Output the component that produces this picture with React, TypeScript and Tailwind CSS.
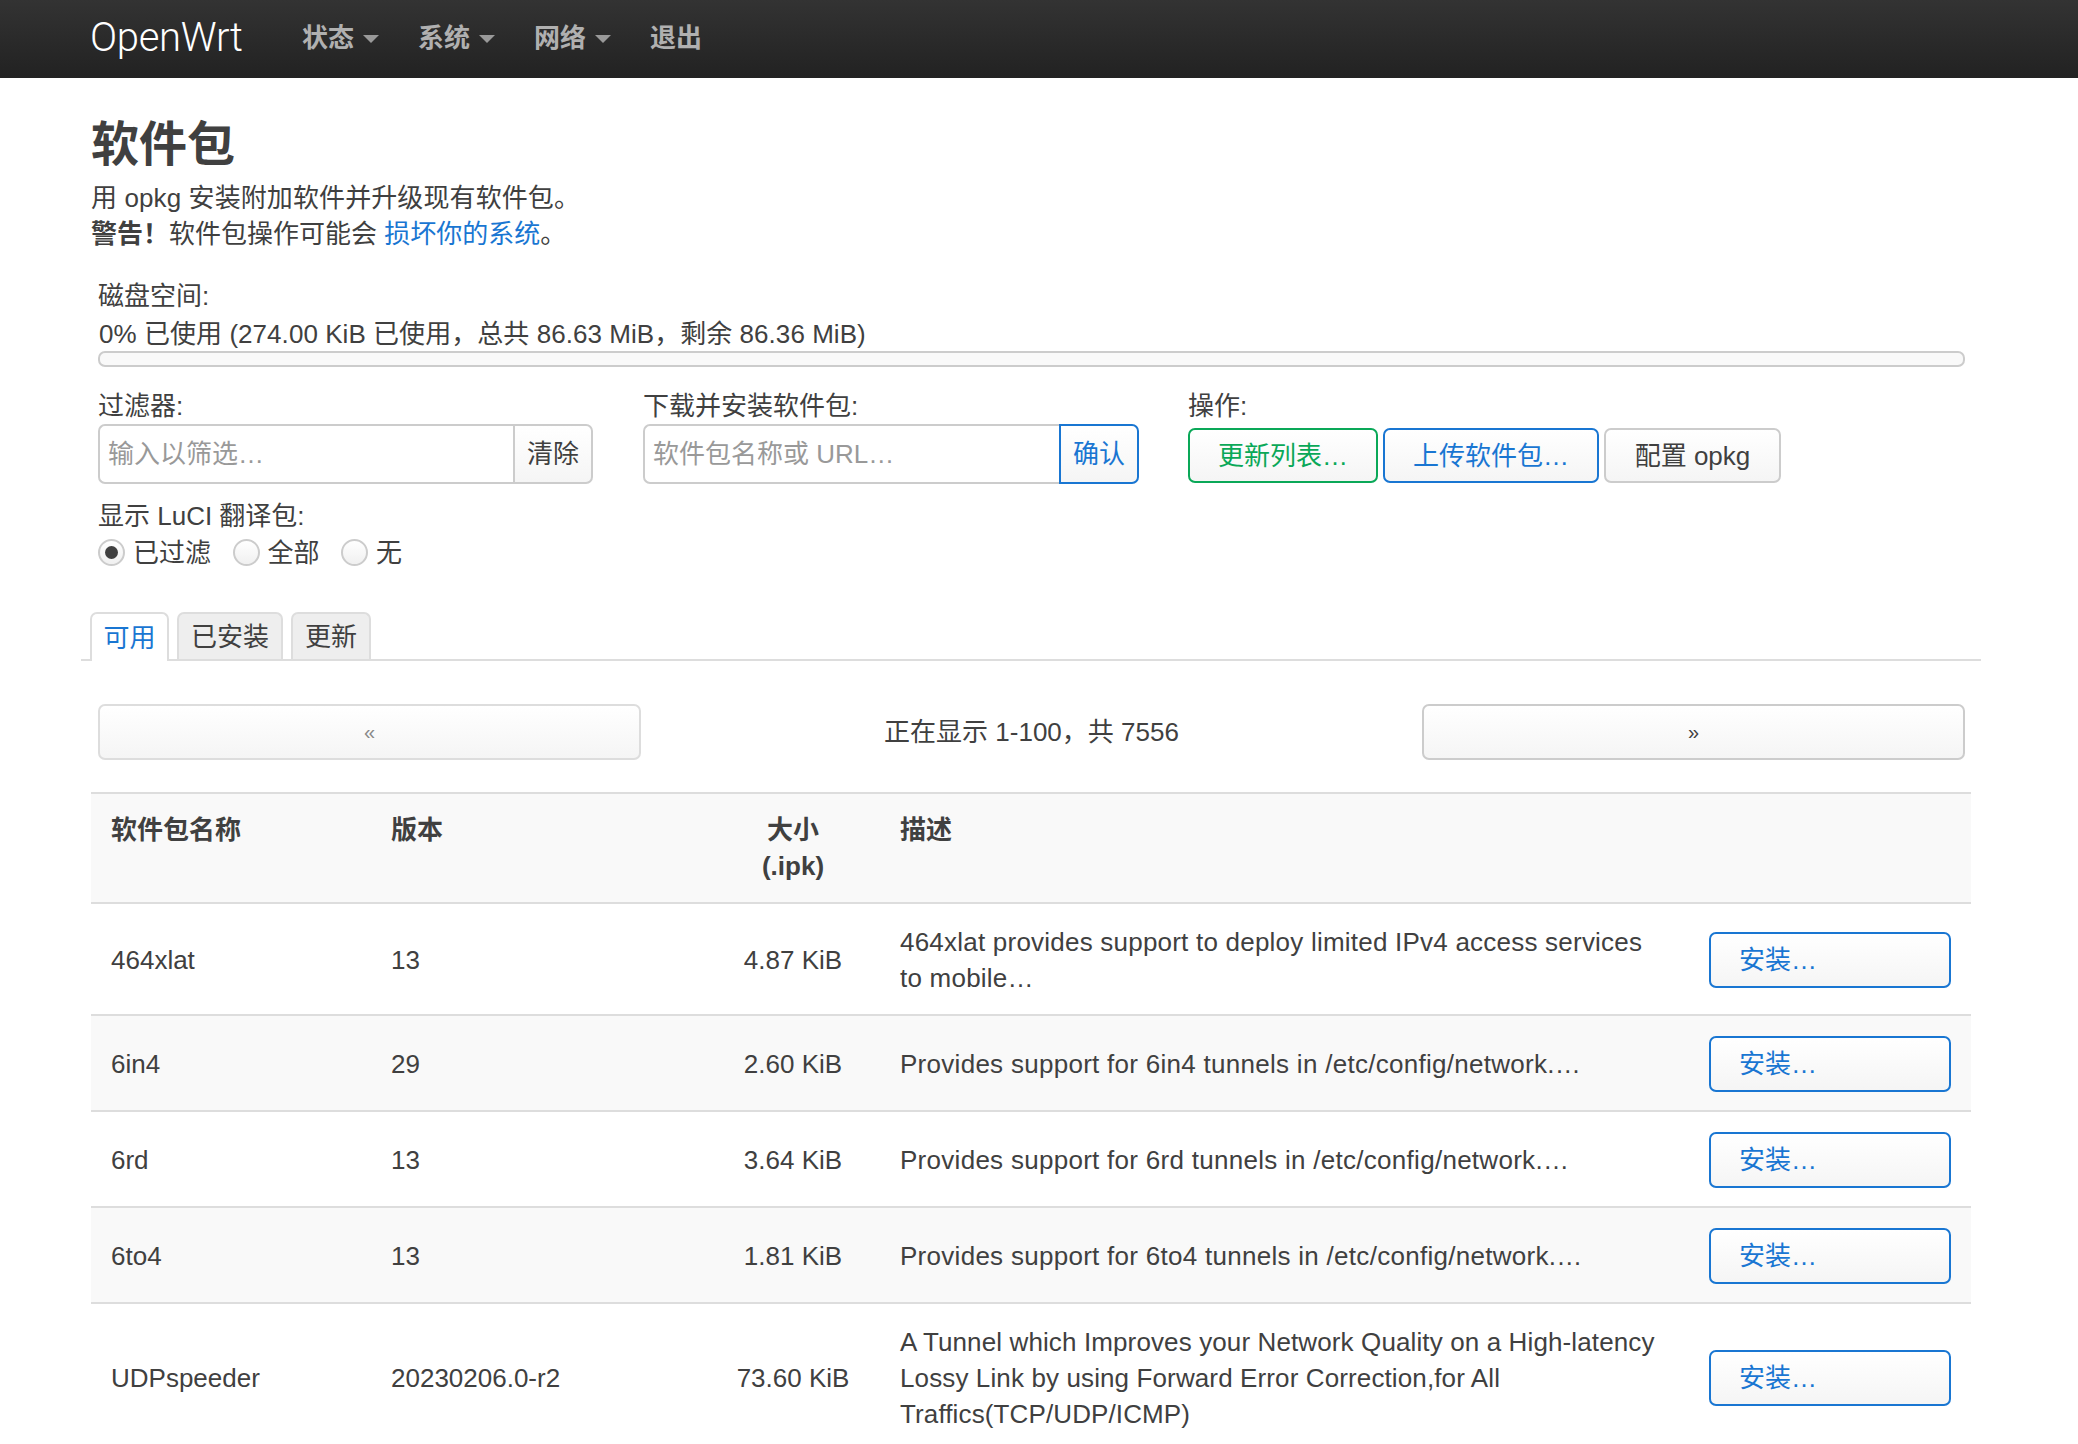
const font = "font-['Liberation_Sans','Noto_Sans_CJK_SC',sans-serif]";

const btn = 'rounded-[7px] border-2 bg-gradient-to-b from-white to-[#f5f5f5] text-[26px] leading-[36px]';

const rows = [
  { name: '464xlat', version: '13', size: '4.87 KiB', tracking: 'tracking-[0.22px]', desc: '464xlat provides support to deploy limited IPv4 access services to mobile…' },
  { name: '6in4', version: '29', size: '2.60 KiB', tracking: 'tracking-[0.28px]', desc: 'Provides support for 6in4 tunnels in /etc/config/network.…' },
  { name: '6rd', version: '13', size: '3.64 KiB', tracking: 'tracking-[0.28px]', desc: 'Provides support for 6rd tunnels in /etc/config/network.…' },
  { name: '6to4', version: '13', size: '1.81 KiB', tracking: 'tracking-[0.28px]', desc: 'Provides support for 6to4 tunnels in /etc/config/network.…' },
  { name: 'UDPspeeder', version: '20230206.0-r2', size: '73.60 KiB', tracking: 'tracking-[0.12px]', desc: 'A Tunnel which Improves your Network Quality on a High-latency Lossy Link by using Forward Error Correction,for All Traffics(TCP/UDP/ICMP)' },
];

function NavItem({ label, caret = true }: { label: string; caret?: boolean }) {
  return (
    <a className="flex items-center gap-[9px] text-[26px] font-bold text-[#b0b0b0]">
      {label}
      {caret ? <span className="mt-[2px] h-0 w-0 border-x-[8px] border-t-[8px] border-x-transparent border-t-[#999]" /> : null}
    </a>
  );
}

function Radio({ label, checked = false }: { label: string; checked?: boolean }) {
  return (
    <label className="flex items-center gap-[8px]">
      <span className="-mt-[2px] flex h-[27px] w-[27px] items-center justify-center rounded-full border-2 border-[#ccc] bg-gradient-to-b from-white to-[#f0f0f0]">
        {checked ? <span className="h-[13px] w-[13px] rounded-full bg-[#404040]" /> : null}
      </span>
      {label}
    </label>
  );
}

function InputGroup({ placeholder, button, primary = false }: { placeholder: string; button: string; primary?: boolean }) {
  return (
    <div className="flex h-[60px] text-[26px]">
      <div className="flex flex-1 items-center rounded-l-[7px] border-2 border-r-0 border-[#ccc] bg-white pl-[8px] text-[#999]">
        {placeholder}
      </div>
      <button
        type="button"
        className={`rounded-r-[7px] border-2 bg-gradient-to-b from-white to-[#f5f5f5] px-[12px] ${primary ? 'border-[#1976d2] text-[#1976d2]' : 'border-[#ccc] text-[#404040]'}`}
      >
        {button}
      </button>
    </div>
  );
}

export default function App() {
  return (
    <div className={`h-[1444px] overflow-hidden bg-white text-[26px] leading-[36px] text-[#404040] ${font}`}>
      <header className="flex h-[78px] items-center bg-gradient-to-b from-[#333] to-[#222] pl-[90px]">
        <div className="-mt-[2px] w-[212px] font-['Roboto',sans-serif] text-[40px] font-light tracking-[-0.3px] text-white">OpenWrt</div>
        <nav className="-mt-[2px] flex items-center gap-[39px]">
          <NavItem label="状态" />
          <NavItem label="系统" />
          <NavItem label="网络" />
          <NavItem label="退出" caret={false} />
        </nav>
      </header>

      <main className="pt-[37px]">
        <div className="pl-[91px]">
          <h1 className="text-[48px] font-bold leading-[60px]">软件包</h1>
          <p className="mt-[5px] tracking-[0.1px]">用 opkg 安装附加软件并升级现有软件包。</p>
          <p>
            <strong>警告！</strong>软件包操作可能会 <a className="text-[#1976d2]">损坏你的系统</a>。
          </p>
        </div>

        <section className="mt-[26px] px-[98px] pr-[113px]">
          <div>磁盘空间:</div>
          <div className="ml-[1px] mt-[2px] tracking-[0.05px]">0% 已使用 (274.00 KiB 已使用，总共 86.63 MiB，剩余 86.36 MiB)</div>
          <div className="-mt-[1px] h-[16px] rounded-[7px] border-2 border-[#ccc] bg-[#f9f9f9]" />
        </section>

        <section className="mt-[21px] flex pl-[98px]">
          <div className="w-[495px]">
            <label>过滤器:</label>
            <InputGroup placeholder="输入以筛选…" button="清除" />
          </div>
          <div className="ml-[50px] w-[496px]">
            <label>下载并安装软件包:</label>
            <InputGroup placeholder="软件包名称或 URL…" button="确认" primary />
          </div>
          <div className="ml-[49px]">
            <label>操作:</label>
            <div className="mt-[4px] flex h-[55px] gap-[5px]">
              <button type="button" className={`${btn} w-[190px] border-[#0aa858] text-[#0aa858]`}>更新列表…</button>
              <button type="button" className={`${btn} w-[216px] border-[#1976d2] text-[#1976d2]`}>上传软件包…</button>
              <button type="button" className={`${btn} w-[177px] border-[#ccc]`}>配置 opkg</button>
            </div>
          </div>
        </section>

        <section className="mt-[14px] pl-[98px]">
          <div>显示 LuCI 翻译包:</div>
          <div className="mt-[1px] flex gap-[21.5px]">
            <Radio label="已过滤" checked />
            <Radio label="全部" />
            <Radio label="无" />
          </div>
        </section>

        <nav className="ml-[81px] mt-[41px] flex h-[49px] w-[1900px] gap-[8px] border-b-2 border-[#ddd] pl-[9px]">
          <a className="-mb-[2px] flex h-[49px] w-[79px] items-center justify-center rounded-t-[7px] border-2 border-b-0 border-[#ddd] bg-white text-[#1976d2]">可用</a>
          <a className="flex h-[47px] w-[106px] items-center justify-center rounded-t-[7px] border-2 border-b-0 border-[#ddd] bg-[#eee]">已安装</a>
          <a className="flex h-[47px] w-[80px] items-center justify-center rounded-t-[7px] border-2 border-b-0 border-[#ddd] bg-[#eee]">更新</a>
        </nav>

        <div className="mt-[43px] flex items-center pl-[98px]">
          <button type="button" className="h-[56px] w-[543px] rounded-[7px] border-2 border-[#ddd] bg-gradient-to-b from-white to-[#f5f5f5] text-[20px] text-[#888]">«</button>
          <div className="w-[781px] text-center">正在显示 1-100，共 7556</div>
          <button type="button" className="h-[56px] w-[543px] rounded-[7px] border-2 border-[#ccc] bg-gradient-to-b from-white to-[#f5f5f5] text-[20px]">»</button>
        </div>

        <table className="ml-[91px] mt-[32px] w-[1880px] table-fixed border-collapse">
          <thead>
            <tr className="h-[110px] border-y-2 border-[#ddd] bg-[#f9f9f9] align-top font-bold">
              <th className="w-[280px] px-[20px] pt-[18px] text-left">软件包名称</th>
              <th className="w-[335px] px-[20px] pt-[18px] text-left">版本</th>
              <th className="w-[174px] px-[20px] pt-[18px] text-center">大小<br />(.ipk)</th>
              <th className="w-[809px] px-[20px] pt-[18px] text-left">描述</th>
              <th className="w-[282px]" />
            </tr>
          </thead>
          <tbody>
            {rows.map((r, i) => (
              <tr key={r.name} className={`border-b-2 border-[#ddd] ${i % 2 === 1 ? 'bg-[#f9f9f9]' : 'bg-white'}`}>
                <td className="px-[20px] pb-[18px] pt-[20px]">{r.name}</td>
                <td className="px-[20px] pb-[18px] pt-[20px]">{r.version}</td>
                <td className="whitespace-nowrap px-[20px] pb-[18px] pt-[20px] text-center">{r.size}</td>
                <td className={`px-[20px] pb-[18px] pt-[20px] ${r.tracking}`}>{r.desc}</td>
                <td className="pb-[18px] pl-[20px] pr-[20px] pt-[20px]">
                  <button type="button" className={`${btn} h-[56px] w-full border-[#1976d2] pl-[28px] text-left text-[#1976d2]`}>安装…</button>
                </td>
              </tr>
            ))}
          </tbody>
        </table>
      </main>
    </div>
  );
}
